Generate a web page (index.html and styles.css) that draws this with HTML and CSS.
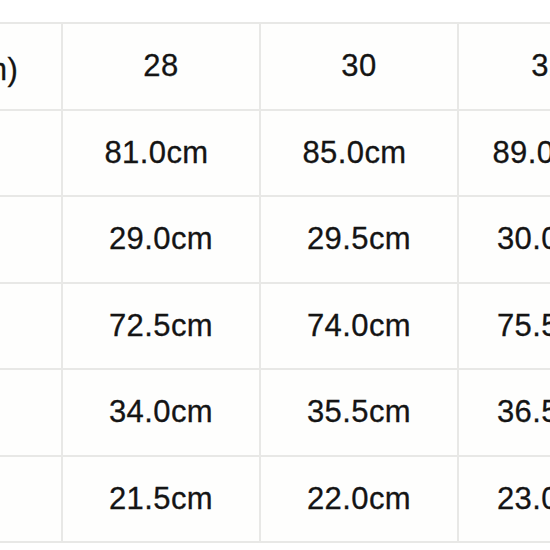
FILE: index.html
```html
<!DOCTYPE html>
<html lang="ko">
<head>
<meta charset="utf-8">
<title>Size chart</title>
<link rel="stylesheet" href="styles.css">
</head>
<body>
<div class="sheet">
  <table class="chart">
    <colgroup>
      <col class="c-label">
      <col class="c-size">
      <col class="c-size">
      <col class="c-size c-narrow">
      <col class="c-size">
    </colgroup>
    <tr>
      <td>사이즈(cm)</td><td>28</td><td>30</td><td>32</td><td>34</td>
    </tr>
    <tr class="shift">
      <td>허리</td><td>81.0cm&nbsp;</td><td>85.0cm&nbsp;</td><td>89.0cm&nbsp;</td><td>93.0cm&nbsp;</td>
    </tr>
    <tr>
      <td>밑위</td><td>29.0cm</td><td>29.5cm</td><td>30.0cm</td><td>30.5cm</td>
    </tr>
    <tr>
      <td>총장</td><td>72.5cm</td><td>74.0cm</td><td>75.5cm</td><td>77.0cm</td>
    </tr>
    <tr>
      <td>허벅지</td><td>34.0cm</td><td>35.5cm</td><td>36.5cm</td><td>37.5cm</td>
    </tr>
    <tr>
      <td>밑단</td><td>21.5cm</td><td>22.0cm</td><td>23.0cm</td><td>24.0cm</td>
    </tr>
  </table>
</div>
</body>
</html>
```
FILE: styles.css
```css
html, body {
  margin: 0;
  padding: 0;
  background: #ffffff;
  overflow: hidden;
  width: 550px;
  height: 550px;
}

.sheet {
  margin-top: 22px;
  margin-left: -177px;
}

.chart {
  border-collapse: collapse;
  table-layout: fixed;
  width: 1014px;
  font-family: "Liberation Sans", Arial, "Noto Sans CJK KR", sans-serif;
  font-size: 31px;
  letter-spacing: 0.4px;
  color: #141414;
  -webkit-text-stroke: 0.3px #141414;
}

.c-label { width: 238px; }
.c-size { width: 198px; }
.c-size.c-narrow { width: 182px; }

.chart td {
  height: 84.5px;
  padding: 0;
  border: 2px solid #e8e8e6;
  background: #fefefd;
  text-align: center;
  vertical-align: middle;
  white-space: nowrap;
}
```
